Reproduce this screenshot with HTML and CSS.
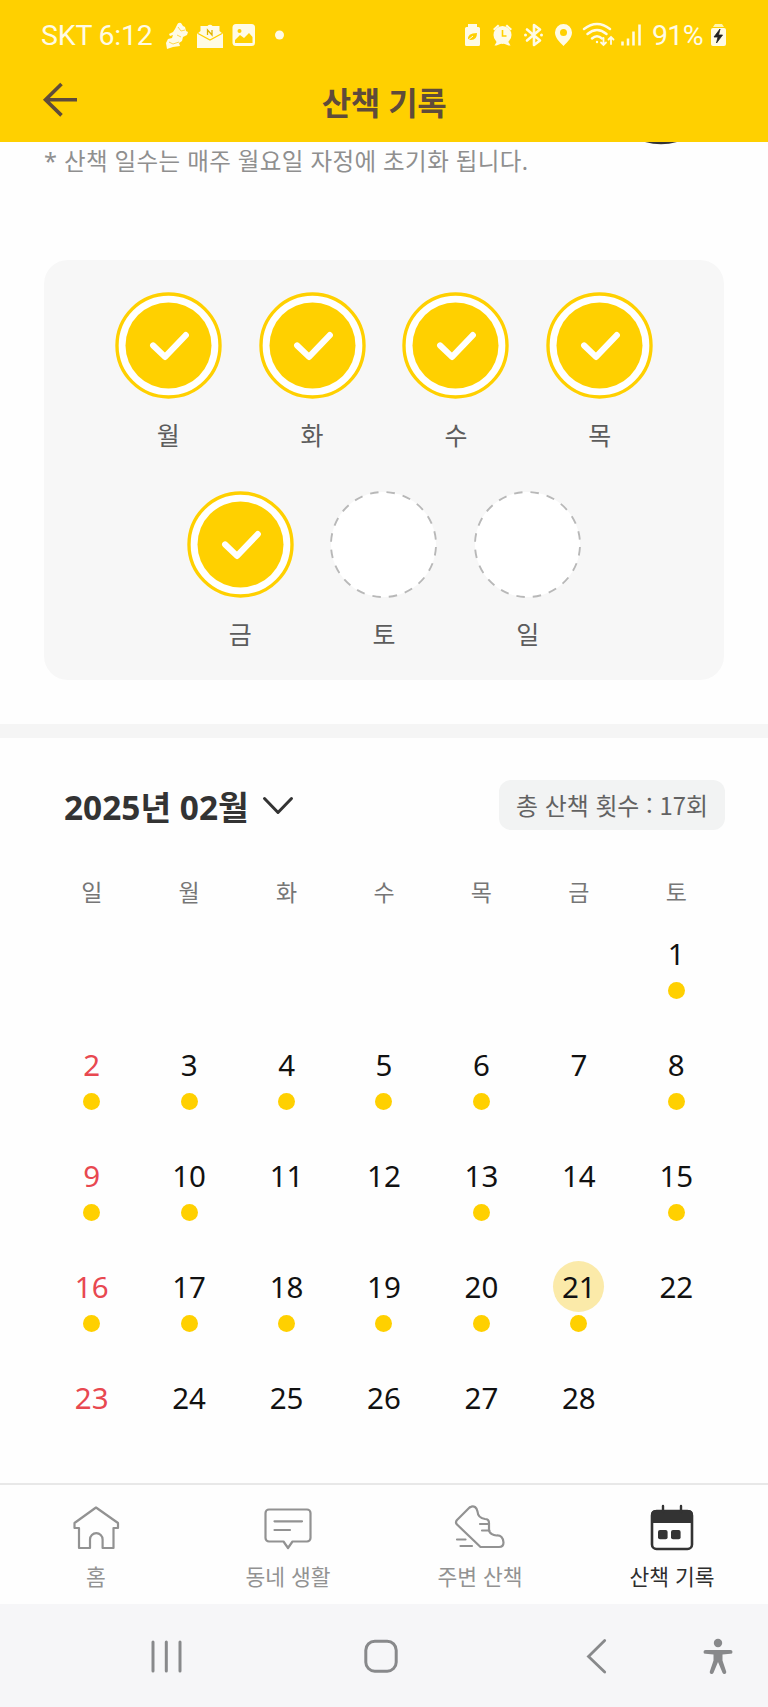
FILE: index.html
```html
<!DOCTYPE html>
<html lang="ko">
<head>
<meta charset="utf-8">
<title>산책 기록</title>
<link rel="stylesheet" href="styles.css">
<script src="app.js" defer></script>
</head>
<body>
<div class="app">
  <header class="header">
    <div class="status">
      <span class="carrier">SKT 6:12</span>
      <svg width="34" height="34" viewBox="160 18 34 34" fill="#fffbe6"><path d="M177 25q1-3 4-2l2 3 2 1 1 4 2 1-1 3-4 2-1 4-3 2 1 3-7 1-6 2-1-6 2-4 4-1 1-3-3 1-1-2 4-2 2-3z"/><path d="M178 27l3 4 4-1M177 35l4 2M169 42l4 2 6-2" fill="none" stroke="#ffd84a" stroke-width="1"/></svg>
      <svg width="34" height="34" viewBox="194 18 34 34"><path fill="#fffbe6" d="M200.500 26h7a3 3 0 0 1 5 0h7v5l3.500 3v14h-26V34l3.500-3z"/><path d="M198 33.500l12 6.500 12-6.500" fill="none" stroke="#ffd000" stroke-width="1.300"/><path d="M207.500 35v-5l4.500 5v-5" fill="none" stroke="#e0b400" stroke-width="1.300"/></svg>
      <svg width="34" height="34" viewBox="228 18 34 34"><rect x="232.500" y="24" width="22.500" height="22" rx="3.500" fill="#fffbe6"/><circle cx="239.500" cy="31" r="2" fill="#ffd000"/><path d="M235 43v-3l5-5 4 3 5-5 3.500 4v6z" fill="#ffd000"/></svg>
      <svg width="30" height="34" viewBox="262 18 30 34"><circle cx="279.500" cy="35" r="4.500" fill="#fffbe6"/></svg>
      <div class="status-end">
        <svg width="24" height="34" viewBox="462 18 24 34"><path fill="#fffbe6" d="M469 24h9v3h1.500q1.500 0 1.500 1.500v16q0 1.500-1.500 1.500h-12q-1.500 0-1.500-1.500v-16q0-1.500 1.500-1.500H469z"/><path d="M469 40q-1-7 9-7 0 7-6 7-2 0-3-1z" fill="#ffd000"/><path d="M468 41l6-5" stroke="#fffbe6"/></svg>
        <svg width="34" height="34" viewBox="486 18 34 34"><g fill="#fffbe6"><circle cx="503.500" cy="35" r="9"/><path d="M494 29l5-4.500 1.500 1.500-5 4.500zM513 29l-5-4.500-1.500 1.500 5 4.500zM495.500 45.500l3-5 4 3-5 2zM511.500 45.500l-3-5-4 3 5 2z"/></g><path d="M503.500 30v6h4" fill="none" stroke="#ffd000" stroke-width="1.600"/></svg>
        <svg width="30" height="34" viewBox="520 18 30 34"><path d="M528 29.500l13 11-6 4.500V25l6 4.500-13 11" fill="none" stroke="#fffbe6" stroke-width="2.600" stroke-linejoin="round" stroke-linecap="round"/><circle cx="526.500" cy="35" r="1.500" fill="#fffbe6"/><circle cx="542.500" cy="35" r="1.500" fill="#fffbe6"/></svg>
        <svg width="30" height="34" viewBox="550 18 30 34"><path fill="#fffbe6" fill-rule="evenodd" d="M564.500 24a8.500 8.500 0 0 1 8.500 8.500c0 5-4 9-8.500 13.500-4.500-4.500-8.500-8.500-8.500-13.500a8.500 8.500 0 0 1 8.500-8.500zm0 5a3.500 3.500 0 1 0 0 7 3.500 3.500 0 1 0 0-7z"/></svg>
        <svg width="38" height="34" viewBox="580 18 38 34" fill="none" stroke="#fffbe6" stroke-width="2.400" stroke-linecap="round"><path d="M585 29q13-10 26 0M588.500 34q9.500-8 19 0M593 38.500q5-4.500 10 0"/><circle cx="598" cy="42" r="1.200" fill="#fffbe6" stroke="none"/><path d="M604.500 38v7m-2.500-2.500l2.500 2.500 2.500-2.500M612 44v-7m-2.500 2.500l2.500-2.500 2.500 2.500" stroke-width="1.800"/></svg>
        <svg width="32" height="34" viewBox="618 18 32 34" fill="none" stroke="#fffbe6" stroke-width="2.500"><path d="M623.500 45.500v-4M629 45.500v-7M634.500 45.500v-14M640.500 45.500v-21"/></svg>
        <span class="percent">91%</span>
        <svg width="20" height="34" viewBox="710 18 20 34"><path fill="#fff6b0" d="M716 24h7l2 3h-11z"/><rect x="712" y="28" width="15" height="18" rx="2" fill="#fffbe6"/><path d="M721 29l-6 8h4l-1.500 6 6-8h-4z" fill="#222" stroke="#222" stroke-width=".8"/></svg>
      </div>
    </div>
    <div class="titlebar">
      <svg class="back" width="38" height="38" viewBox="41 81 38 38" fill="none" stroke="#5f4b3a" stroke-width="3.600"><path d="M77 99.700H45.500M61.500 84L45.500 99.700 61.500 115.400"/></svg>
      <h1 class="title">산책 기록</h1>
    </div>
  </header>

  <section class="week">
    <svg class="peek" width="32" height="4" viewBox="0 0 32 4"><path d="M0 0h32Q16 4.500 0 0z" fill="#333"/></svg>
    <p class="note">* 산책 일수는 매주 월요일 자정에 초기화 됩니다.</p>
    <div class="stamps" id="stamps"></div>
  </section>

  <section class="calendar">
    <div class="cal-head">
      <h2 class="month">2025년 02월</h2>
      <svg class="chev" width="32" height="22" viewBox="0 0 32 22" fill="none" stroke="#333" stroke-width="3" stroke-linecap="round" stroke-linejoin="round"><path d="M2.500 3.500L16 17.500 29.500 3.500"/></svg>
      <span class="total">총 산책 횟수 : 17회</span>
    </div>
    <div class="weekdays"><span>일</span><span>월</span><span>화</span><span>수</span><span>목</span><span>금</span><span>토</span></div>
    <div class="days" id="days"></div>
  </section>

  <nav class="tabs">
    <a class="tab"><svg width="54" height="50" viewBox="69 1502 54 50" fill="none" stroke="#929292" stroke-width="2.200" stroke-linejoin="round"><path d="M96 1507.500L74.500 1523v5H79v20h11v-8.500a6.300 6.300 0 0 1 12.600 0v8.500H113.500v-20h4.500v-5z"/></svg><span>홈</span></a>
    <a class="tab"><svg width="54" height="50" viewBox="261 1502 54 50" fill="none" stroke="#929292" stroke-width="2.200" stroke-linejoin="round" stroke-linecap="round"><path d="M269 1509.500h38a3.500 3.500 0 0 1 3.500 3.500v25a3.500 3.500 0 0 1-3.500 3.500h-14.500l-4.500 6.500-4.500-6.500H269a3.500 3.500 0 0 1-3.500-3.500v-25a3.500 3.500 0 0 1 3.500-3.500zM274.500 1521.300H302M274.500 1530H290"/></svg><span>동네 생활</span></a>
    <a class="tab"><svg width="54" height="50" viewBox="453 1502 54 50" fill="none" stroke="#929292" stroke-width="2.200" stroke-linejoin="round" stroke-linecap="round"><path d="M470 1507L457 1520q-2 2.500 0 4.500l23.500 22.500H499q4.500 0 4.500-4.500-.5-7.500-7-7-5.500-.5-7.500-4.500v-8q0-4-4-4-7-1-7.500-7.500-.5-3-2.500-4.500-2.500-1.500-5 .5zM480 1524h9M482 1530.500h7.500M457 1539.500h8.500M460.500 1546h11.500"/></svg><span>주변 산책</span></a>
    <a class="tab tab-on"><svg width="54" height="50" viewBox="645 1502 54 50"><rect x="652" y="1511" width="40" height="38" rx="4.500" fill="none" stroke="#333" stroke-width="2.600"/><path d="M651 1523v-8.500q0-4.500 4.500-4.500h33q4.500 0 4.500 4.500v8.500z" fill="#333"/><path d="M663 1512v-6M681 1512v-6" stroke="#333" stroke-width="2.400" stroke-linecap="round"/><rect x="658" y="1530" width="9.600" height="9.300" rx="2" fill="#333"/><rect x="671" y="1530" width="9.600" height="9.300" rx="2" fill="#333"/></svg><span>산책 기록</span></a>
  </nav>

  <footer class="sysbar">
    <svg width="36" height="40" viewBox="148 1636 36 40" stroke="#88898b" stroke-width="3" stroke-linecap="round"><path d="M153 1642v29M166.300 1642v29M180 1642v29"/></svg>
    <svg width="36" height="40" viewBox="363 1636 36 40" fill="none" stroke="#88898b" stroke-width="3"><rect x="365.800" y="1641.200" width="30.400" height="30" rx="9"/></svg>
    <svg width="36" height="40" viewBox="579 1636 36 40" fill="none" stroke="#88898b" stroke-width="2.800" stroke-linecap="round"><path d="M604.700 1640.500L588.500 1656.500l16.200 15.500"/></svg>
    <svg width="36" height="40" viewBox="700 1636 36 40" fill="#88898b"><circle cx="718" cy="1643" r="4.200"/><path d="M705.500 1650h25q2 0 2 1.900t-2 1.900l-8 .8v6l3.700 11q.5 2-1.200 2.400-1.800.4-2.500-1.200L718 1662l-4.500 10.800q-.7 1.600-2.500 1.200-1.700-.4-1.200-2.400l3.700-11v-6l-8-.8q-2 0-2-1.900t2-1.900z"/></svg>
  </footer>
</div>
</body>
</html>
```

FILE: app.js
```
const stamps = document.getElementById('stamps');
['월', '화', '수', '목', '금', '토', '일'].forEach((name, i) => {
  const done = i < 5;
  const art = done
    ? '<circle cx="54" cy="54" r="52" fill="#fff" stroke="#ffd000" stroke-width="3.4"/><circle cx="54" cy="54" r="43.400" fill="#ffd000"/><path d="M38.500 54L50.500 65.500 71.500 43.500" fill="none" stroke="#fff" stroke-width="6.200" stroke-linecap="round" stroke-linejoin="round"/>'
    : '<circle cx="54" cy="54" r="53" fill="#fff" stroke="#b8b8b8" stroke-width="1.900" stroke-dasharray="8.500 8.150" stroke-dashoffset="14"/>';
  stamps.insertAdjacentHTML('beforeend',
    `<div class="stamp"><svg width="107" height="107" viewBox="0 0 108 108">${art}</svg><span>${name}</span></div>`);
});

const walked = new Set([1, 2, 3, 4, 5, 6, 8, 9, 10, 13, 15, 16, 17, 18, 19, 20, 21]);
const days = document.getElementById('days');
for (let d = 1; d <= 28; d++) {
  const names = ['day'];
  if (d === 1) names.push('day-first');
  if (d % 7 === 2) names.push('day-sunday');
  if (d === 21) names.push('day-today');
  days.insertAdjacentHTML('beforeend',
    `<div class="${names.join(' ')}"><span class="num">${d}</span>${walked.has(d) ? '<i class="dot"></i>' : ''}</div>`);
}
```

FILE: styles.css
```css
* { box-sizing: border-box; margin: 0; padding: 0; }
body { background: #fefefe; font-family: "Noto Sans CJK KR", sans-serif; }
svg { display: block; flex: none; }
.app { width: 768px; height: 1707px; display: flex; flex-direction: column; overflow: hidden; }

.header { height: 142px; background: #ffd000; flex: none; }
.status { height: 70px; display: flex; align-items: center; padding: 0 39px 0 41px; color: #fffbe6; font: 400 28.500px/34px Roboto, sans-serif; white-space: nowrap; }
.carrier { width: 119px; letter-spacing: -0.2px; padding-top: 1px; }
.status-end { display: flex; align-items: center; margin-left: auto; }
.percent { width: 60px; padding: 1px 0 0 3px; letter-spacing: -0.7px; }
.titlebar { height: 72px; display: grid; grid-template-columns: 38px 1fr 38px; align-items: center; padding: 0 41px; }
.back { margin-top: -12px; }
.title { color: #5f4b3a; font-size: 32px; line-height: 44px; font-weight: 700; text-align: center; margin-top: -10px; letter-spacing: -0.4px; }

.week { height: 582px; flex: none; padding: 0 44px; }
.peek { margin-left: 601px; }
.note { color: #8f8f8f; font-family: "Noto Sans", "Noto Sans CJK KR", sans-serif; font-size: 23.500px; line-height: 30px; letter-spacing: 0.42px; white-space: nowrap; height: 114px; }
.stamps { height: 420px; border-radius: 24px; background: #f7f7f7; padding: 32px 52px 0; display: flex; flex-wrap: wrap; justify-content: center; align-content: flex-start; row-gap: 25px; }
.stamp { width: 143.800px; height: 174px; display: flex; flex-direction: column; align-items: center; gap: 17px; color: #5c5c5c; font-size: 25px; line-height: 36px; }

.calendar { flex: 1; border-top: 14px solid #f5f5f5; padding: 42px 43px 0; }
.cal-head { display: flex; align-items: center; height: 50px; padding-left: 21px; }
.month { font-family: "Noto Sans", "Noto Sans CJK KR", sans-serif; font-size: 33.400px; line-height: 46px; font-weight: 700; color: #333; white-space: nowrap; margin-top: 4px; }
.chev { margin-left: 13px; margin-top: 1px; }
.total { margin-left: auto; width: 226px; height: 50px; border-radius: 12px; background: #f2f3f3; color: #626262; font-size: 23.900px; line-height: 50px; text-align: center; white-space: nowrap; }
.weekdays { display: grid; grid-template-columns: repeat(7, 1fr); margin-top: 44px; height: 34px; font-size: 23px; line-height: 34px; color: #767676; text-align: center; }
.days { display: grid; grid-template-columns: repeat(7, 1fr); grid-auto-rows: 111px; margin-top: 20px; }
.day { display: flex; flex-direction: column; align-items: center; font-family: "Noto Sans", sans-serif; font-size: 29.500px; color: #111; }
.day-first { grid-column: 7; }
.day-sunday { color: #e84850; }
.num { width: 51px; height: 51px; line-height: 51px; border-radius: 50%; text-align: center; }
.day-today .num { background: #fbeaa9; }
.dot { width: 17px; height: 17px; border-radius: 50%; background: #ffd000; margin-top: 3px; }

.tabs { height: 121px; flex: none; border-top: 2px solid #e8e8e8; background: #fefefe; display: grid; grid-template-columns: repeat(4, 1fr); }
.tab { display: flex; flex-direction: column; align-items: center; padding-top: 17px; gap: 7px; font-size: 21.500px; line-height: 34px; color: #929292; }
.tab-on { color: #2e2e2e; }
.sysbar { height: 103px; flex: none; background: #f6f6f8; display: grid; grid-template-columns: 215px 216px 121px 36px; padding: 32px 0 0 148px; }
```
